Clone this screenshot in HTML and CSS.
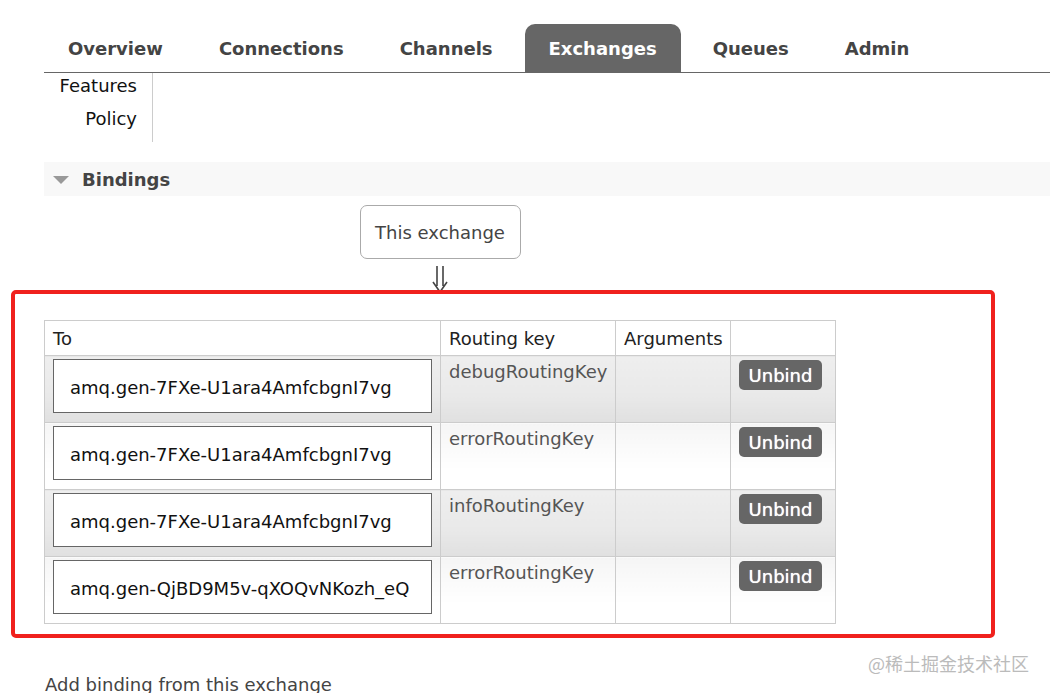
FILE: index.html
```html
<!DOCTYPE html>
<html>
<head>
<meta charset="utf-8">
<link rel="stylesheet" href="styles.css">
</head>
<body>
<div class="page">
  <ul class="tabs">
    <li class="tab">Overview</li>
    <li class="tab">Connections</li>
    <li class="tab">Channels</li>
    <li class="tab active">Exchanges</li>
    <li class="tab">Queues</li>
    <li class="tab">Admin</li>
  </ul>
  <div class="subnav">
    <div class="subnav-col">
      <div class="sub-item">Features</div>
      <div class="sub-item">Policy</div>
    </div>
  </div>
  <div class="section-head">
    <span class="tri"></span>
    <span class="section-title">Bindings</span>
  </div>
  <div class="bindings">
    <div class="flow">
      <div class="this-ex">This exchange</div>
      <svg class="arrow" width="20" height="28" viewBox="0 0 20 28">
        <path d="M7 1 V21 M13 1 V21 M3 17 L10 27 L17 17" fill="none" stroke="#444" stroke-width="1.6"/>
      </svg>
    </div>
    <table class="list">
      <thead>
        <tr>
          <th class="c-to">To</th>
          <th class="c-rk">Routing key</th>
          <th class="c-args">Arguments</th>
          <th class="c-act"></th>
        </tr>
      </thead>
      <tbody>
        <tr class="alt1">
          <td class="c-to"><span class="q">amq.gen-7FXe-U1ara4AmfcbgnI7vg</span></td>
          <td class="c-rk">debugRoutingKey</td>
          <td class="c-args"></td>
          <td class="c-act"><span class="btn">Unbind</span></td>
        </tr>
        <tr class="alt2">
          <td class="c-to"><span class="q">amq.gen-7FXe-U1ara4AmfcbgnI7vg</span></td>
          <td class="c-rk">errorRoutingKey</td>
          <td class="c-args"></td>
          <td class="c-act"><span class="btn">Unbind</span></td>
        </tr>
        <tr class="alt1">
          <td class="c-to"><span class="q">amq.gen-7FXe-U1ara4AmfcbgnI7vg</span></td>
          <td class="c-rk">infoRoutingKey</td>
          <td class="c-args"></td>
          <td class="c-act"><span class="btn">Unbind</span></td>
        </tr>
        <tr class="alt2">
          <td class="c-to"><span class="q">amq.gen-QjBD9M5v-qXOQvNKozh_eQ</span></td>
          <td class="c-rk">errorRoutingKey</td>
          <td class="c-args"></td>
          <td class="c-act"><span class="btn">Unbind</span></td>
        </tr>
      </tbody>
    </table>
    <div class="add">Add binding from this exchange</div>
  </div>
</div>
<div class="annot"></div>
<div class="watermark">@稀土掘金技术社区</div>
</body>
</html>
```
FILE: styles.css
```css
html, body {
  margin: 0;
  padding: 0;
  background: #fff;
  overflow: hidden;
}
body {
  font-family: "DejaVu Sans", Verdana, sans-serif;
  font-size: 18px;
  color: #333;
  width: 1050px;
  height: 693px;
  position: relative;
}
.page {
  padding-left: 44px;
}
.tabs {
  list-style: none;
  margin: 24px 0 0 0;
  padding: 0;
  display: flex;
  gap: 8px;
  border-bottom: 1px solid #666;
}
.tab {
  font-weight: bold;
  font-size: 18px;
  color: #444;
  padding: 0 24px;
  height: 48px;
  line-height: 49px;
  border-radius: 10px 10px 0 0;
}
.tab.active {
  background: #666;
  color: #fff;
}
.subnav {
  display: flex;
}
.subnav-col {
  width: 93px;
  padding-right: 15px;
  padding-top: 1px;
  border-right: 1px solid #ccc;
  text-align: right;
  height: 68px;
}
.sub-item {
  color: #111;
  line-height: 24px;
  height: 33px;
}
.section-head {
  margin-top: 20px;
  height: 34px;
  background: #f8f8f8;
  display: flex;
  align-items: center;
}
.tri {
  width: 0;
  height: 0;
  border-left: 8px solid transparent;
  border-right: 8px solid transparent;
  border-top: 8px solid #999;
  margin-left: 9px;
  margin-right: 13px;
  margin-top: 1px;
}
.section-title {
  font-weight: bold;
  color: #444;
  font-size: 18px;
}
.bindings {
  width: 792px;
}
.flow {
  display: flex;
  flex-direction: column;
  align-items: center;
  padding-top: 9px;
}
.this-ex {
  width: 159px;
  height: 52px;
  border: 1px solid #aaa;
  border-radius: 7px;
  text-align: center;
  line-height: 54px;
  color: #444;
}
.arrow {
  display: block;
  margin-top: 6px;
}
.list {
  margin-top: 27px;
  border-collapse: collapse;
  width: 792px;
}
.list th, .list td {
  border: 1px solid #ccc;
  padding: 0;
  text-align: left;
  vertical-align: top;
}
.list th {
  font-weight: normal;
  color: #222;
  height: 32px;
  line-height: 32px;
  padding: 2px 0 0 8px;
  background: #fff;
}
.list th.c-to { width: 387px; }
.list th.c-rk { width: 166px; }
.list th.c-args { width: 106px; }
.list td {
  height: 62px;
}
.list td.c-to {
  padding: 3px 0 0 8px;
}
.list td.c-rk {
  color: #555;
  padding: 4px 0 0 8px;
  line-height: 24px;
}
.list td.c-act {
  padding: 4px 0 0 8px;
}
tr.alt1 td {
  background: linear-gradient(#eeeeee, #e9e9e9 60%, #e0e0e0);
}
tr.alt2 td {
  background: linear-gradient(#f5f5f5, #ffffff 70%);
}
.q {
  display: block;
  width: 361px;
  height: 52px;
  border: 1px solid #666;
  background: #fff;
  padding-left: 16px;
  line-height: 56px;
  color: #111;
}
.btn {
  display: inline-block;
  background: #666;
  color: #fff;
  font-weight: normal;
  border-radius: 5px;
  width: 83px;
  height: 30px;
  line-height: 31px;
  text-align: center;
  font-size: 18px;
  text-shadow: 0 0 0.8px #fff;
}
.add {
  margin-top: 50px;
  color: #444;
  padding-left: 1px;
}
.annot {
  position: absolute;
  left: 11px;
  top: 290px;
  width: 976px;
  height: 340px;
  border: 4px solid #f0211d;
  border-radius: 5px;
}
.watermark {
  position: absolute;
  left: 868px;
  top: 650px;
  font-family: "Noto Sans CJK SC", sans-serif;
  font-size: 18px;
  color: #bbb;
}
```
